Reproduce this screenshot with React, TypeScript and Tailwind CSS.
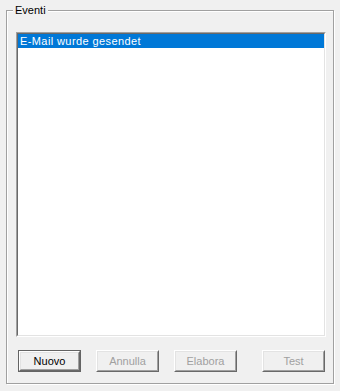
const font = { fontFamily: '"Liberation Sans", Arial, sans-serif' };

type BtnProps = { label: string; isDefault?: boolean; disabled?: boolean; className?: string };

const Button = ({ label, isDefault, disabled, className = "" }: BtnProps) => {
  const face = (
    <div className="h-full border border-t-white border-l-white border-r-[#696969] border-b-[#696969]">
      <div className="h-full flex items-center justify-center border border-t-[#e3e3e3] border-l-[#e3e3e3] border-r-[#a0a0a0] border-b-[#a0a0a0] bg-[#f0f0f0]">
        <span className={`text-[11px] leading-[13px] ${disabled ? "text-[#a0a0a0]" : "text-black"}`}>{label}</span>
      </div>
    </div>
  );
  return (
    <div className={`w-[63px] h-[22px] ${className}`}>
      {isDefault ? <div className="h-full border border-[#646464]">{face}</div> : face}
    </div>
  );
};

export default function App() {
  return (
    <div className="w-[340px] h-[391px] bg-[#f0f0f0] pt-[10px] pl-[6px]" style={font}>
      {/* Group box */}
      <div className="relative w-[328px] h-[374px] border border-[#a0a0a0] shadow-[1px_1px_0_#fff,inset_1px_1px_0_#fff]">
        <span className="absolute left-[6px] top-[-7px] px-[2px] bg-[#f0f0f0] text-[11px] leading-[13px] text-black">
          Eventi
        </span>

        {/* Listbox */}
        <div className="ml-[9px] mt-[21px] w-[310px] h-[305px] border border-t-[#a0a0a0] border-l-[#a0a0a0] border-r-white border-b-white">
          <div className="h-full bg-white border border-t-[#696969] border-l-[#696969] border-r-[#e3e3e3] border-b-[#e3e3e3]">
            <div className="h-[14px] bg-[#0078d7] text-white text-[11px] leading-[14px] tracking-[0.4px] pl-[2px]">
              E-Mail wurde gesendet
            </div>
          </div>
        </div>

        {/* Buttons */}
        <div className="flex ml-[11px] mt-[13px]">
          <Button label="Nuovo" isDefault />
          <Button label="Annulla" disabled className="ml-[15px]" />
          <Button label="Elabora" disabled className="ml-[15px]" />
          <Button label="Test" disabled className="ml-[25px]" />
        </div>
      </div>
    </div>
  );
}
